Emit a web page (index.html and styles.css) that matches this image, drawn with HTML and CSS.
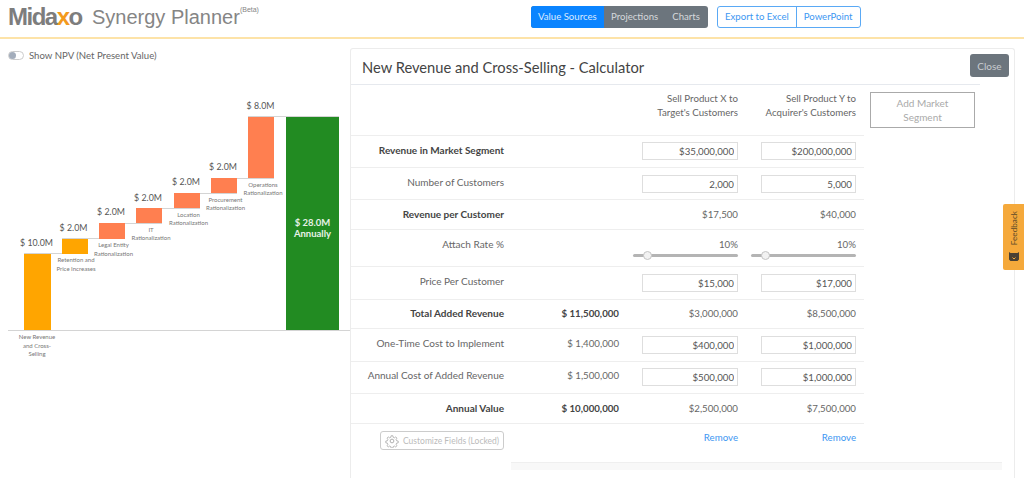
FILE: index.html
```html
<!DOCTYPE html>
<html lang="en">
<head>
  <meta charset="UTF-8">
  <meta name="viewport" content="width=device-width, initial-scale=1" />
  <title>Midaxo Synergy Planner</title>
  <link rel="stylesheet" href="styles.css">
</head>
<body>
  <header class="topbar">
    <div class="logo">Mida<span class="logo-x">x</span>o</div>
    <div class="product">Synergy Planner<sup class="beta">(Beta)</sup></div>
    <div class="btn-group tabs">
      <a class="tab tab-active">Value Sources</a>
      <a class="tab">Projections</a>
      <a class="tab">Charts</a>
    </div>
    <div class="btn-group exports">
      <a class="export">Export to Excel</a>
      <a class="export">PowerPoint</a>
    </div>
  </header>

  <main class="main">
    <section class="left">
      <div class="npv">
        <span class="toggle"><span class="toggle-knob"></span></span>
        Show NPV (Net Present Value)
      </div>
      <svg class="chart" width="350" height="300" viewBox="0 70 350 300">
        <!-- connectors -->
        <g class="connector">
          <line x1="24" y1="253.5" x2="88" y2="253.5" />
          <line x1="62" y1="238.5" x2="125" y2="238.5" />
          <line x1="99" y1="223.5" x2="162" y2="223.5" />
          <line x1="136" y1="208.5" x2="200" y2="208.5" />
          <line x1="174" y1="193.5" x2="237" y2="193.5" />
          <line x1="211" y1="178.5" x2="274" y2="178.5" />
          <line x1="248" y1="116.5" x2="339" y2="116.5" />
          <line x1="8" y1="330.5" x2="350" y2="330.5" />
        </g>
        <rect class="bar-orange" x="24" y="254" width="27" height="76" />
        <rect class="bar-orange" x="62" y="239" width="26" height="15" />
        <rect class="bar-coral" x="99" y="223" width="26" height="16" />
        <rect class="bar-coral" x="136" y="208" width="26" height="15" />
        <rect class="bar-coral" x="174" y="193" width="26" height="15" />
        <rect class="bar-coral" x="211" y="178" width="26" height="15" />
        <rect class="bar-coral" x="248" y="117" width="26" height="61" />
        <rect class="bar-green" x="286" y="117" width="53" height="213" />

        <g class="amount">
          <text x="36.500" y="246">$ 10.0M</text>
          <text x="73.500" y="231">$ 2.0M</text>
          <text x="111" y="215">$ 2.0M</text>
          <text x="148" y="201">$ 2.0M</text>
          <text x="186" y="185">$ 2.0M</text>
          <text x="223" y="170">$ 2.0M</text>
          <text x="260.500" y="109">$ 8.0M</text>
        </g>
        <g class="cat">
          <text x="37" y="339">New Revenue</text>
          <text x="37" y="347.500">and Cross-</text>
          <text x="37" y="356">Selling</text>
          <text x="76" y="262">Retention and</text>
          <text x="76" y="270.500">Price Increases</text>
          <text x="113.500" y="247">Legal Entity</text>
          <text x="113.500" y="255.500">Rationalization</text>
          <text x="151" y="231.500">IT</text>
          <text x="151" y="240">Rationalization</text>
          <text x="188.500" y="216.500">Location</text>
          <text x="188.500" y="225">Rationalization</text>
          <text x="225.500" y="201.500">Procurement</text>
          <text x="225.500" y="210">Rationalization</text>
          <text x="263" y="186.500">Operations</text>
          <text x="263" y="195">Rationalization</text>
        </g>
        <g class="total">
          <text x="312.500" y="226">$ 28.0M</text>
          <text x="312.500" y="237">Annually</text>
        </g>
      </svg>
    </section>

    <section class="panel">
      <h2 class="panel-title">New Revenue and Cross-Selling - Calculator</h2>
      <button class="close" type="button">Close</button>

      <div class="panel-body">
        <div class="calc">
          <div class="row row-head">
            <div></div>
            <div></div>
            <div class="cell">Sell Product X to<br>Target's Customers</div>
            <div class="cell">Sell Product Y to<br>Acquirer's Customers</div>
          </div>
          <div class="row">
            <div class="label strong">Revenue in Market Segment</div>
            <div></div>
            <div class="cell"><input class="money" value="$35,000,000"></div>
            <div class="cell"><input class="money" value="$200,000,000"></div>
          </div>
          <div class="row row-drop">
            <div class="label">Number of Customers</div>
            <div></div>
            <div class="cell"><input class="money" value="2,000"></div>
            <div class="cell"><input class="money" value="5,000"></div>
          </div>
          <div class="row row-short">
            <div class="label strong">Revenue per Customer</div>
            <div></div>
            <div class="cell">$17,500</div>
            <div class="cell">$40,000</div>
          </div>
          <div class="row row-tall">
            <div class="label">Attach Rate %</div>
            <div></div>
            <div class="cell slider-cell">10%<div class="slider"><span class="slider-knob"></span></div></div>
            <div class="cell slider-cell">10%<div class="slider"><span class="slider-knob"></span></div></div>
          </div>
          <div class="row row-wide row-drop">
            <div class="label">Price Per Customer</div>
            <div></div>
            <div class="cell"><input class="money" value="$15,000"></div>
            <div class="cell"><input class="money" value="$17,000"></div>
          </div>
          <div class="row row-slim row-up">
            <div class="label strong">Total Added Revenue</div>
            <div class="cell strong">$ 11,500,000</div>
            <div class="cell">$3,000,000</div>
            <div class="cell">$8,500,000</div>
          </div>
          <div class="row row-wide row-drop">
            <div class="label">One-Time Cost to Implement</div>
            <div class="cell">$ 1,400,000</div>
            <div class="cell"><input class="money" value="$400,000"></div>
            <div class="cell"><input class="money" value="$1,000,000"></div>
          </div>
          <div class="row row-drop row-up">
            <div class="label">Annual Cost of Added Revenue</div>
            <div class="cell">$ 1,500,000</div>
            <div class="cell"><input class="money" value="$500,000"></div>
            <div class="cell"><input class="money" value="$1,000,000"></div>
          </div>
          <div class="row row-short">
            <div class="label strong">Annual Value</div>
            <div class="cell strong">$ 10,000,000</div>
            <div class="cell">$2,500,000</div>
            <div class="cell">$7,500,000</div>
          </div>
          <div class="row row-foot">
            <div class="label">
              <button class="customize" type="button" disabled>
                <svg width="14" height="14" viewBox="0 0 24 24" fill="none" stroke="#aaa" stroke-width="1.6" stroke-linejoin="round">
                  <circle cx="12" cy="12" r="3.2" />
                  <path d="M10.3 2h3.4l.6 3 2.2 1 2.6-1.700 2.400 2.400-1.700 2.600 1 2.200 3 .6v3.400l-3 .6-1 2.200 1.700 2.600-2.400 2.400-2.600-1.700-2.200 1-.6 3h-3.400l-.6-3-2.200-1-2.600 1.700-2.400-2.400 1.700-2.600-1-2.200-3-.6v-3.400l3-.6 1-2.200-1.700-2.600 2.400-2.400 2.600 1.700 2.200-1z" transform="translate(12 12) scale(.9) translate(-12 -12)" />
                </svg>
                Customize Fields (Locked)
              </button>
            </div>
            <div></div>
            <div class="cell"><a class="remove">Remove</a></div>
            <div class="cell"><a class="remove">Remove</a></div>
          </div>
        </div>
        <button class="add-segment" type="button">Add Market Segment</button>
      </div>
      <div class="scrollbar"></div>
    </section>
  </main>

  <aside class="feedback">
    <span class="feedback-text">Feedback</span>
    <svg class="feedback-icon" width="10" height="9" viewBox="0 0 10 9">
      <path d="M0 0l1.500 1h7L10 0v7.500L8.500 9h-7L0 7.500z" fill="#4a4034" />
      <path d="M3.500 5.500L5 7l1.500-1.500" fill="none" stroke="#f5a93b" />
    </svg>
  </aside>
</body>
</html>
```

FILE: styles.css
```css
* {
  box-sizing: border-box;
}

html, body {
  height: 100%;
  overflow: hidden;
}

body {
  margin: 0;
  font-family: Lato, "Open Sans", sans-serif;
  font-size: 10px;
  color: #666;
  background: #fff;
}

/* top bar */
.topbar {
  display: flex;
  align-items: flex-start;
  height: 39px;
  padding-left: 8px;
  border-bottom: 2px solid #fde3a8;
}

.logo {
  width: 84px;
  font-family: "Liberation Sans", Arial, sans-serif;
  font-size: 24px;
  font-weight: 700;
  letter-spacing: -1.500px;
  line-height: 34px;
  color: #7d7d7d;
}

.logo-x {
  color: #f39a1d;
}

.product {
  width: 439px;
  font-family: "Liberation Sans", Arial, sans-serif;
  font-size: 20px;
  line-height: 34px;
  color: #858585;
}

.beta {
  font-size: 7px;
  vertical-align: 12px;
  line-height: 0;
}

.btn-group {
  display: flex;
  margin-top: 6px;
  height: 22px;
  font-size: 9.600px;
  line-height: 22px;
  border-radius: 3px;
  overflow: hidden;
}

.tabs {
  width: 177px;
  margin-right: 9px;
  background: #6c757d;
  color: #d6d9dc;
}

.tab {
  padding: 0 7px;
}

.tab-active {
  width: 73px;
  background: #0a84ff;
  color: #dbeaff;
  white-space: nowrap;
}

.exports {
  border: 1px solid #5aa9f5;
  line-height: 20px;
}

.export {
  padding: 0 7px;
  color: #3d97f2;
}

.export + .export {
  border-left: 1px solid #5aa9f5;
}

/* main area */
.main {
  display: flex;
  align-items: flex-start;
}

.left {
  width: 350px;
  flex: none;
}

.npv {
  display: flex;
  align-items: center;
  gap: 5px;
  height: 31px;
  padding: 1px 0 0 8px;
  font-size: 9.600px;
}

.toggle {
  position: relative;
  display: block;
  width: 16px;
  height: 9px;
  border: 1px solid #ccc;
  border-radius: 5px;
  background: #fff;
}

.toggle-knob {
  position: absolute;
  top: 0;
  left: 0;
  width: 7px;
  height: 7px;
  border-radius: 50%;
  background: #a3adbb;
}

.chart {
  display: block;
}

.connector line {
  stroke: #d4d4d4;
  stroke-width: 1;
}

.bar-orange { fill: #ffa500; }
.bar-coral  { fill: #ff7f50; }
.bar-green  { fill: #228b22; }

.amount text {
  font-size: 8.800px;
  fill: #555;
  text-anchor: middle;
}

.cat text {
  font-size: 6px;
  fill: #777;
  text-anchor: middle;
}

.total text {
  font-size: 9.500px;
  font-weight: 700;
  fill: #e8f2e8;
  text-anchor: middle;
}

/* calculator panel */
.panel {
  position: relative;
  width: 665px;
  height: 430px;
  margin-top: 9px;
  border: 1px solid #ececec;
  border-bottom: 0;
  border-radius: 3px 3px 0 0;
}

.panel-title {
  width: 629px;
  height: 36px;
  margin: 0;
  padding: 9px 0 0 11px;
  font-size: 14.700px;
  font-weight: 400;
  line-height: 18px;
  color: #444;
  border-bottom: 1px solid #e6e9ee;
}

.close {
  position: absolute;
  top: 5px;
  right: 5px;
  width: 39px;
  height: 23px;
  padding: 0;
  border: 0;
  border-radius: 3px;
  font: inherit;
  color: #c9ccd0;
  background: #6c757d;
}

.panel-body {
  display: flex;
  align-items: flex-start;
}

.calc {
  width: 513px;
  flex: none;
}

.row {
  display: grid;
  grid-template-columns: 153px 115px 119px 119px;
  height: 32px;
  padding-top: 5px;
  border-bottom: 1px solid #eee;
  line-height: 18px;
}

.row-head {
  height: 51px;
  padding-top: 6px;
  line-height: 14px;
}

.row-short {
  height: 30px;
}

.row-tall {
  height: 37px;
  padding-top: 7px;
  line-height: 15px;
}

.row-wide {
  height: 33px;
}

.row-slim {
  height: 29px;
}

.row-up {
  padding-top: 4px;
}

.row-foot {
  height: 38px;
  padding-top: 4px;
  border-bottom: 0;
}

.label,
.cell {
  text-align: right;
}

.cell {
  font-size: 9.700px;
}

.cell:last-child {
  padding-right: 1px;
}

.strong {
  font-weight: 700;
  color: #444;
}

.money {
  display: block;
  width: 96px;
  height: 18px;
  margin-top: 1px;
  margin-left: auto;
  padding: 0 3px 0 2px;
  border: 1px solid #dedede;
  border-radius: 0;
  font: inherit;
  line-height: 16px;
  text-align: right;
  color: #555;
  outline: 0;
}

.cell:last-child .money {
  width: 95px;
}

.row-drop .money {
  margin-top: 2px;
}

.slider-cell {
  display: flex;
  flex-direction: column;
  align-items: flex-end;
}

.slider {
  position: relative;
  width: 105px;
  height: 3px;
  margin-top: 2px;
  border-radius: 2px;
  background: #b4b4b4;
}

.slider-knob {
  position: absolute;
  top: -3px;
  left: 10px;
  width: 9px;
  height: 9px;
  border: 1px solid #c4c4c4;
  border-radius: 50%;
  background: #f2f2f2;
}

.customize {
  display: inline-flex;
  align-items: center;
  gap: 4px;
  width: 124px;
  height: 19px;
  margin-top: 3px;
  padding: 0 0 0 4px;
  border: 1px solid #ccc;
  border-radius: 3px;
  font-family: inherit;
  font-size: 8.500px;
  color: #bbb;
  background: #fff;
  white-space: nowrap;
}

.remove {
  color: #3d97f2;
}

.add-segment {
  width: 105px;
  height: 36px;
  margin: 7px 0 0 6px;
  padding: 0 14px;
  border: 1px solid #aaa;
  background: #fff;
  font: inherit;
  line-height: 14px;
  color: #aaa;
}

.scrollbar {
  width: 491px;
  height: 8px;
  margin-left: 160px;
  border-top: 1px solid #efefef;
  background: #f8f8f8;
}

/* feedback tab */
.feedback {
  position: absolute;
  top: 204px;
  right: 0;
  display: flex;
  flex-direction: column;
  align-items: center;
  gap: 7px;
  width: 21px;
  height: 66px;
  padding-top: 7px;
  border-radius: 2px 0 0 2px;
  background: #f5a93b;
}

.feedback-text {
  font-size: 8.200px;
  line-height: 10px;
  color: #5c4a2a;
  writing-mode: vertical-rl;
  transform: rotate(180deg);
}
```
